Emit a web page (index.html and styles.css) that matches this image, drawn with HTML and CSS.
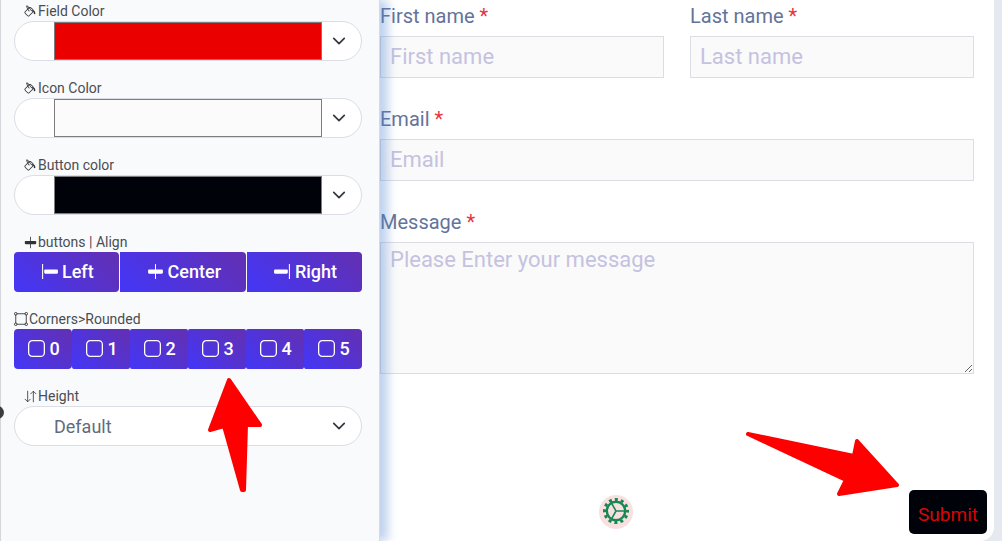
FILE: index.html
```html
<!DOCTYPE html>
<html lang="en">
<head>
<meta charset="utf-8">
<title>Form designer</title>
<link rel="stylesheet" href="styles.css">
</head>
<body>
<svg class="defs" aria-hidden="true">
  <symbol id="bucket" viewBox="0 0 16 16"><path d="M6.192 2.78c-.458-.677-.927-1.248-1.35-1.643a3 3 0 0 0-.71-.515c-.217-.104-.56-.205-.882-.02-.367.213-.427.63-.43.896-.003.304.064.664.173 1.044.196.687.556 1.528 1.035 2.402L.752 8.22c-.277.277-.269.656-.218.918.055.283.187.593.36.903.348.627.92 1.361 1.626 2.068.707.707 1.441 1.278 2.068 1.626.31.173.62.305.903.36.262.05.64.059.918-.218l5.615-5.615c.118.257.092.512.05.939-.03.292-.068.665-.073 1.176v.123h.003a1 1 0 0 0 1.993 0H14v-.057a1 1 0 0 0-.004-.117c-.055-1.25-.7-2.738-1.86-3.494a4 4 0 0 0-.211-.434c-.349-.626-.92-1.36-1.627-2.067S8.857 3.052 8.23 2.704c-.31-.172-.62-.304-.903-.36-.262-.05-.64-.058-.918.219zM4.16 1.867c.381.356.844.922 1.311 1.632l-.704.705c-.382-.727-.66-1.402-.813-1.938a3.3 3.3 0 0 1-.131-.673q.137.09.337.274m.394 3.965c.54.852 1.107 1.567 1.607 2.033a.5.5 0 1 0 .682-.732c-.453-.422-1.017-1.136-1.564-2.027l1.088-1.088q.081.181.183.365c.349.627.92 1.361 1.627 2.068.706.707 1.44 1.278 2.068 1.626q.183.103.365.183l-4.861 4.862-.068-.01c-.137-.027-.342-.104-.608-.252-.524-.292-1.186-.8-1.846-1.46s-1.168-1.32-1.46-1.846c-.147-.265-.225-.47-.251-.607l-.01-.068zm2.87-1.935a2.4 2.4 0 0 1-.241-.561c.135.033.324.11.562.241.524.292 1.186.8 1.846 1.46.45.45.83.901 1.118 1.31a3.5 3.5 0 0 0-1.066.091 11 11 0 0 1-.76-.694c-.66-.66-1.167-1.322-1.458-1.847z"/></symbol>
  <symbol id="chevron" viewBox="0 0 16 16"><path d="m2 5 6 6 6-6" fill="none" stroke="#343a40" stroke-width="2" stroke-linecap="round" stroke-linejoin="round"/></symbol>
  <symbol id="app" viewBox="0 0 16 16"><rect x=".6" y=".6" width="14.800" height="14.800" rx="3.500" fill="none" stroke="currentColor" stroke-width="1.200"/></symbol>
</svg>

<main class="layout">
  <aside class="panel">
    <span class="handle"></span>
    <div class="group">
      <label class="caption" for="field-color"><svg class="mini"><use href="#bucket"/></svg>Field Color</label>
      <div class="pill"><input class="swatch" type="color" id="field-color" value="#eb0000"><svg class="chevron"><use href="#chevron"/></svg></div>
    </div>
    <div class="group">
      <label class="caption" for="icon-color"><svg class="mini"><use href="#bucket"/></svg>Icon Color</label>
      <div class="pill"><input class="swatch" type="color" id="icon-color" value="#fbfbfb"><svg class="chevron"><use href="#chevron"/></svg></div>
    </div>
    <div class="group">
      <label class="caption" for="button-color"><svg class="mini"><use href="#bucket"/></svg>Button color</label>
      <div class="pill"><input class="swatch" type="color" id="button-color" value="#000209"><svg class="chevron"><use href="#chevron"/></svg></div>
    </div>
    <div class="group" role="group" aria-labelledby="align-caption">
      <div class="caption" id="align-caption"><svg class="mini" viewBox="0 0 16 16"><path d="M8 1v14" stroke="currentColor"/><rect x="1" y="6" width="14" height="4" rx="1"/></svg>buttons | Align</div>
      <div class="buttons spaced">
        <button class="btn" type="button"><svg class="icon" viewBox="0 0 16 16"><path d="M1.500 1v14" stroke="currentColor"/><rect x="3" y="6" width="13" height="4" rx="1"/></svg>Left</button>
        <button class="btn" type="button"><svg class="icon" viewBox="0 0 16 16"><path d="M8 1v14" stroke="currentColor"/><rect x="1" y="6" width="14" height="4" rx="1"/></svg>Center</button>
        <button class="btn" type="button"><svg class="icon" viewBox="0 0 16 16"><path d="M14.500 1v14" stroke="currentColor"/><rect x="0" y="6" width="13" height="4" rx="1"/></svg>Right</button>
      </div>
    </div>
    <div class="group" role="group" aria-labelledby="corner-caption">
      <div class="caption wide" id="corner-caption"><svg class="mini" viewBox="0 0 16 16"><path d="M3 2h10M3 14h10M2 3v10M14 3v10" stroke="currentColor"/><g fill="none" stroke="currentColor"><circle cx="2" cy="2" r="1.500"/><circle cx="14" cy="2" r="1.500"/><circle cx="2" cy="14" r="1.500"/><circle cx="14" cy="14" r="1.500"/></g></svg>Corners&gt;Rounded</div>
      <div class="buttons equal">
        <button class="btn" type="button"><svg class="icon"><use href="#app"/></svg>0</button>
        <button class="btn" type="button"><svg class="icon"><use href="#app"/></svg>1</button>
        <button class="btn" type="button"><svg class="icon"><use href="#app"/></svg>2</button>
        <button class="btn" type="button"><svg class="icon"><use href="#app"/></svg>3</button>
        <button class="btn" type="button"><svg class="icon"><use href="#app"/></svg>4</button>
        <button class="btn" type="button"><svg class="icon"><use href="#app"/></svg>5</button>
      </div>
    </div>
    <div class="group">
      <label class="caption" for="height"><svg class="mini" viewBox="0 0 16 16"><path d="M4.500 1v13.500M1 11l3.500 3.500L8 11M11.500 15V1.500M8 5l3.500-3.500L15 5" fill="none" stroke="currentColor"/></svg>Height</label>
      <div class="pill"><select class="select" id="height"><option>Default</option></select><svg class="chevron"><use href="#chevron"/></svg></div>
    </div>
    <svg class="pointer pointer-up" viewBox="0 0 58 118" aria-hidden="true"><path d="M23 4 54 49 40 49 38 114 36 114 18 50 4 54Z"/></svg>
  </aside>

  <form class="card">
    <div class="fields">
      <div class="field">
        <label class="label" for="first">First name <span class="required">*</span></label>
        <input class="input" id="first" type="text" placeholder="First name">
      </div>
      <div class="field">
        <label class="label" for="last">Last name <span class="required">*</span></label>
        <input class="input" id="last" type="text" placeholder="Last name">
      </div>
      <div class="field full">
        <label class="label" for="email">Email <span class="required">*</span></label>
        <input class="input" id="email" type="email" placeholder="Email">
      </div>
      <div class="field full">
        <label class="label" for="message">Message <span class="required">*</span></label>
        <textarea class="input message" id="message" placeholder="Please Enter your message"></textarea>
      </div>
    </div>
    <div class="footer">
      <button class="gear" type="button" aria-label="Settings"><svg class="gear-icon" viewBox="0 0 26 26"><g fill="none" stroke="#198754"><circle cx="13" cy="13" r="11.500" stroke-width="3" stroke-dasharray="3 3.021" stroke-dashoffset="1.500"/><circle cx="13" cy="13" r="9.200" stroke-width="2.400"/><path d="M13 13h9M13 13 8.500 5.200M13 13l-4.500 7.800" stroke-width="1.600"/></g></svg></button>
      <button class="submit" type="submit">Submit</button>
      <svg class="pointer pointer-right" viewBox="0 0 156 68" aria-hidden="true"><path d="M4 4 110 26 113 11 153 55 95 64 102 50Z"/></svg>
    </div>
  </form>
</main>
</body>
</html>
```
FILE: styles.css
```css
* {
  box-sizing: border-box;
}

body {
  margin: 0;
  background: #e6e9ef;
  font-family: Roboto, "Liberation Sans", sans-serif;
}

button,
input,
select,
textarea {
  font: inherit;
}

.defs {
  position: absolute;
  width: 0;
  height: 0;
}

.layout {
  display: flex;
  min-height: 100vh;
  overflow: hidden;
}

/* Settings panel */
.panel {
  position: relative;
  z-index: 1;
  display: flex;
  flex: 0 0 380px;
  flex-direction: column;
  gap: 17px;
  padding: 1px 17px 0 13px;
  border-right: 1px solid #d5dbe6;
  border-left: 1px solid #d5d6d9;
  background: #f9fafc;
  box-shadow: 8px 0 9px #4d80cf59;
}

.handle {
  position: absolute;
  top: 406px;
  left: -10px;
  width: 13px;
  height: 13px;
  border-radius: 50%;
  background: #3c3c3c;
}

.caption {
  display: flex;
  align-items: center;
  gap: 1px;
  height: 20px;
  padding-left: 10px;
  color: #4b4d52;
  font-size: 14px;
  line-height: 20px;
}

.caption.wide {
  padding-left: 0;
}

.mini {
  width: 13px;
  height: 13px;
  fill: currentColor;
  color: #303236;
}

.wide .mini {
  width: 14px;
  height: 14px;
}

.pill {
  display: flex;
  align-items: center;
  height: 40px;
  border: 1px solid #dcdde5;
  border-radius: 20px;
  background: #fff;
}

.swatch {
  flex: 1;
  height: 38px;
  margin: 0 0 0 39px;
  padding: 0;
  border: 0;
  background: none;
}

.swatch::-webkit-color-swatch-wrapper {
  padding: 0;
}

.swatch::-webkit-color-swatch {
  border: 1px solid #7d7d7d;
  border-radius: 0;
}

.select {
  flex: 1;
  height: 38px;
  padding: 0 0 0 39px;
  border: 0;
  appearance: none;
  background: none;
  color: #626b7c;
  font-size: 18px;
}

.chevron {
  width: 14px;
  height: 14px;
  margin: 0 15px 0 10px;
}

.buttons {
  display: flex;
}

.spaced {
  gap: 1px;
}

.btn {
  display: flex;
  flex: 1 1 auto;
  align-items: center;
  justify-content: center;
  gap: 4px;
  height: 40px;
  padding: 0 0 2px 2px;
  border: 0;
  border-radius: 0 4px 4px 0;
  background: linear-gradient(45deg, #4636f1 10%, #6030b8 90%);
  color: #fff;
  font-size: 18px;
  font-weight: 500;
}

.equal .btn {
  flex: 1 1 0;
  border-radius: 2px;
}

.buttons .btn:first-child {
  border-radius: 4px;
}

.equal .btn:last-child {
  border-radius: 2px 4px 4px 2px;
}

.icon {
  width: 17px;
  height: 17px;
  fill: currentColor;
}

/* Form preview */
.card {
  display: flex;
  flex: 1;
  flex-direction: column;
  justify-content: space-between;
  margin-right: 8px;
  padding: 1px 7px 7px 0;
  border-radius: 0 0 14px 0;
  background: #fff;
}

.fields {
  display: grid;
  grid-template-columns: 1fr 1fr;
  gap: 26px;
  padding-right: 13px;
}

.field {
  display: flex;
  flex-direction: column;
  gap: 5px;
}

.full {
  grid-column: 1 / -1;
}

.label {
  color: #64739b;
  font-size: 20px;
  line-height: 30px;
}

.required {
  color: #e5353f;
}

.input {
  width: 100%;
  height: 42px;
  padding: 0 9px 2px;
  border: 1px solid #dcdde4;
  border-radius: 0;
  background: #fafafa;
  color: #444;
  font-size: 22px;
}

.input::placeholder {
  color: #c5c2e0;
}

.message {
  height: 132px;
  padding-top: 4px;
  resize: vertical;
}

.footer {
  position: relative;
  display: flex;
  align-items: center;
  justify-content: space-between;
}

.gear {
  display: grid;
  place-items: center;
  width: 34px;
  height: 34px;
  margin-left: 36%;
  padding: 0 0 2px;
  border: 0;
  border-radius: 50%;
  background: #f8dfe0;
}

.gear-icon {
  width: 26px;
  height: 26px;
}

.submit {
  height: 44px;
  padding: 4px 9px 0;
  border: 0;
  border-radius: 5px;
  background: #000209;
  color: #d90303;
  font-size: 19px;
}

/* Callout arrows */
.pointer {
  position: absolute;
  fill: #f00;
  stroke: #f00;
  stroke-width: 4px;
  stroke-linejoin: round;
}

.pointer-up {
  top: 376px;
  left: 205px;
  width: 58px;
  height: 118px;
}

.pointer-right {
  right: 87px;
  bottom: 36px;
  width: 156px;
  height: 68px;
}
```
